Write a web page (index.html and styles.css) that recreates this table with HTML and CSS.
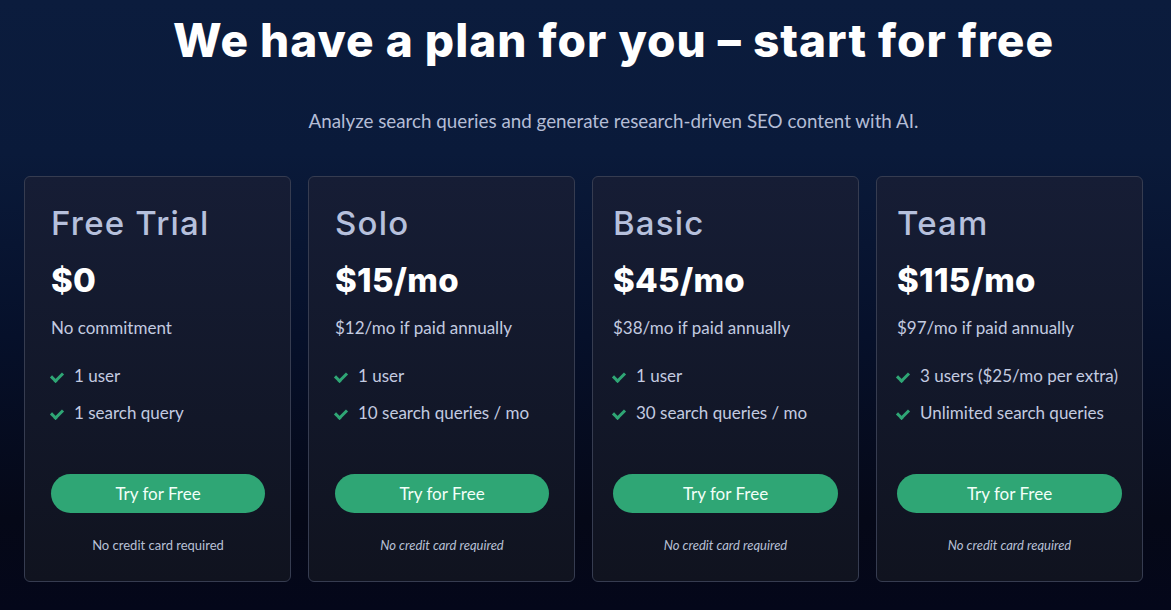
FILE: index.html
```html
<!DOCTYPE html>
<html lang="en">

<head>
    <meta charset="UTF-8">
    <meta name="viewport" content="width=device-width, initial-scale=1.0">
    <title>Pricing</title>
    <link rel="stylesheet" href="styles.css">
</head>

<body>
    <section class="pricing">
        <!-- Header -->
        <div class="intro">
            <h1>We have a plan for you &ndash; start for free</h1>
            <p class="lead">Analyze search queries and generate research-driven SEO content with AI.</p>
        </div>

        <!-- Plans -->
        <div class="plans">
            <div class="plan">
                <h2>Free Trial</h2>
                <div class="price">$0</div>
                <p class="terms">No commitment</p>
                <ul class="features">
                    <li>1 user</li>
                    <li>1 search query</li>
                </ul>
                <button>Try for Free</button>
                <p class="note">No credit card required</p>
            </div>

            <div class="plan">
                <h2>Solo</h2>
                <div class="price">$15/mo</div>
                <p class="terms">$12/mo if paid annually</p>
                <ul class="features">
                    <li>1 user</li>
                    <li>10 search queries / mo</li>
                </ul>
                <button>Try for Free</button>
                <p class="note italic">No credit card required</p>
            </div>

            <div class="plan wide">
                <h2>Basic</h2>
                <div class="price">$45/mo</div>
                <p class="terms">$38/mo if paid annually</p>
                <ul class="features">
                    <li>1 user</li>
                    <li>30 search queries / mo</li>
                </ul>
                <button>Try for Free</button>
                <p class="note italic">No credit card required</p>
            </div>

            <div class="plan wide">
                <h2>Team</h2>
                <div class="price">$115/mo</div>
                <p class="terms">$97/mo if paid annually</p>
                <ul class="features">
                    <li>3 users ($25/mo per extra)</li>
                    <li>Unlimited search queries</li>
                </ul>
                <button>Try for Free</button>
                <p class="note italic">No credit card required</p>
            </div>
        </div>
    </section>
</body>

</html>
```

FILE: styles.css
```css
/* General Styles */
* {
    margin: 0;
    padding: 0;
    box-sizing: border-box;
}

body {
    font-family: 'Lato', sans-serif;
    background: linear-gradient(180deg, #0b1c3d 0%, #0a1a3a 25%, #06102a 55%, #050817 85%, #04071a 100%);
    color: #c3cbe0;
    height: 610px;
    overflow: hidden;
}

button {
    cursor: pointer;
    border: none;
    font-family: inherit;
}

/* Header */
.pricing {
    padding: 12px 24px 0 24px;
}

.intro {
    text-align: center;
    padding-left: 56px;
}

.intro h1 {
    font-family: 'Inter', sans-serif;
    font-size: 46px;
    font-weight: 800;
    color: #ffffff;
    line-height: 56px;
    letter-spacing: 1px;
}

.intro .lead {
    font-size: 18.8px;
    color: #b4bdd6;
    margin-top: 40px;
    line-height: 26px;
}

/* Plans */
.plans {
    display: grid;
    grid-template-columns: repeat(4, 267px);
    gap: 17px;
    margin-top: 42px;
}

.plan {
    background: linear-gradient(180deg, #161d35 0%, #121728 60%, #10131f 100%);
    border: 1.5px solid #363c50;
    border-radius: 6px;
    padding: 26px 18px 28px 26px;
    display: flex;
    flex-direction: column;
    height: 406px;
}

.plan.wide {
    padding-left: 20px;
}

.plan h2 {
    font-family: 'Inter', sans-serif;
    font-size: 33px;
    font-weight: 500;
    color: #b6c0dc;
    line-height: 40px;
    letter-spacing: 1.2px;
}

.plan .price {
    font-family: 'Inter', sans-serif;
    font-size: 33px;
    font-weight: 800;
    color: #ffffff;
    line-height: 40px;
    margin-top: 17px;
    letter-spacing: 0.3px;
}

.plan .terms {
    font-size: 17px;
    line-height: 22px;
    margin-top: 17px;
    color: #c3cbe0;
}

.features {
    list-style: none;
    margin-top: 26px;
}

.features li {
    font-size: 17px;
    line-height: 22px;
    margin-bottom: 15px;
    padding-left: 23px;
    position: relative;
    white-space: nowrap;
    color: #c3cbe0;
}

.features li::before {
    content: "";
    position: absolute;
    left: 2px;
    top: 5px;
    width: 5px;
    height: 9px;
    border-right: 3px solid #2fa675;
    border-bottom: 3px solid #2fa675;
    transform: rotate(45deg);
}

.plan button {
    margin-top: auto;
    background: #2fa675;
    color: #f2fff8;
    height: 39px;
    border-radius: 20px;
    font-size: 17px;
    width: 214px;
}

.plan .note {
    width: 214px;
    font-size: 13px;
    text-align: center;
    color: #b8c0d6;
    margin-top: 24px;
}

.plan.wide button,
.plan.wide .note {
    width: 225px;
}

.plan .note.italic {
    font-style: italic;
}
```
